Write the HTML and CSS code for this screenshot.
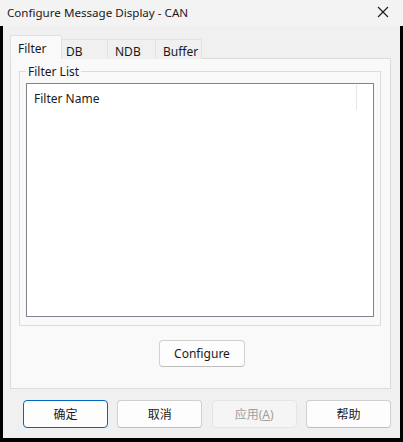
FILE: index.html
```html
<!DOCTYPE html>
<html lang="zh-CN">
<head>
    <meta charset="UTF-8">
    <meta name="viewport" content="width=device-width, initial-scale=1.0">
    <title>Configure Message Display - CAN</title>
    <link rel="stylesheet" href="styles.css">
</head>
<body>
    <div class="window">
        <div class="titlebar">
            <span class="title">Configure Message Display - CAN</span>
            <button class="close" type="button" aria-label="Close">
                <svg width="12" height="12" viewBox="0 0 12 12">
                    <path d="M1 1 L11 11 M11 1 L1 11" stroke="#1a1a1a" stroke-width="1.1" fill="none"/>
                </svg>
            </button>
        </div>
        <div class="client">
            <div class="tabs">
                <div class="tab active">Filter</div>
                <div class="tab">DB</div>
                <div class="tab">NDB</div>
                <div class="tab">Buffer</div>
            </div>
            <div class="tab-panel">
                <div class="group">
                    <span class="group-title">Filter List</span>
                    <div class="listbox">
                        <div class="list-header">
                            <div class="col-name">Filter Name</div>
                            <div class="col-rest"></div>
                        </div>
                    </div>
                </div>
                <div class="panel-actions">
                    <button class="btn" type="button">Configure</button>
                </div>
            </div>
            <div class="dialog-buttons">
                <button class="btn btn-default" type="button">确定</button>
                <button class="btn" type="button">取消</button>
                <button class="btn" type="button" disabled>应用(<u>A</u>)</button>
                <button class="btn" type="button">帮助</button>
            </div>
        </div>
    </div>
</body>
</html>
```

FILE: styles.css
```css
/* Dialog window */
body {
    margin: 0;
    padding: 0;
    font-family: "Noto Sans", "Noto Sans CJK SC", sans-serif;
    font-size: 12px;
    color: #1a1a1a;
}

.window {
    width: 403px;
    height: 442px;
    background-color: #000;
    display: flex;
    flex-direction: column;
}

.titlebar {
    height: 26px;
    background-color: #f3f3f3;
    display: flex;
    align-items: center;
    justify-content: space-between;
    padding: 0 10px 0 7px;
    flex-shrink: 0;
}

.title {
    font-size: 11.6px;
    color: #1a1a1a;
    margin-top: -2px;
}

.close {
    border: none;
    background: none;
    padding: 0;
    width: 12px;
    height: 12px;
    display: flex;
    margin-right: 4px;
    margin-top: -2px;
}

.client {
    flex: 1;
    margin: 0 3px 4px 3px;
    background-color: #f0f0f0;
    padding: 9px 9px 0 7px;
    display: flex;
    flex-direction: column;
}

/* Tabs */
.tabs {
    display: flex;
    align-items: flex-end;
    height: 24px;
    position: relative;
    z-index: 1;
    margin-bottom: -1px;
}

.tab {
    height: 20px;
    width: 47px;
    box-sizing: border-box;
    border: 1px solid #e3e3e3;
    border-bottom: none;
    background-color: #f0f0f0;
    padding: 3px 0 0 5px;
    font-size: 12px;
    margin-left: -1px;
}

.tab.active {
    height: 24px;
    width: 52px;
    margin-left: 0;
    background-color: #f9f9f9;
    border-color: #e0e0e0;
    padding: 4px 0 0 7px;
}

.tab:nth-child(2) {
    padding-left: 4px;
}

.tab:nth-child(3) {
    width: 49px;
    padding-left: 7px;
}

.tab:nth-child(4) {
    padding-left: 7px;
}

.tab-panel {
    height: 331px;
    box-sizing: border-box;
    border: 1px solid #dcdcdc;
    background-color: #f9f9f9;
    padding: 12px 9px 0 8px;
}

/* Group box */
.group {
    position: relative;
    height: 255px;
    box-sizing: border-box;
    border: 1px solid #dcdcdc;
    padding: 11px 6px 8px 6px;
}

.group-title {
    position: absolute;
    top: -9px;
    left: 6px;
    padding: 0 2px;
    background-color: #f9f9f9;
    font-size: 12px;
}

.listbox {
    height: 100%;
    box-sizing: border-box;
    border: 1px solid #82828c;
    background-color: #fff;
}

.list-header {
    display: flex;
    height: 25px;
    padding-top: 1px;
}

.col-name {
    width: 330px;
    box-sizing: border-box;
    padding: 5px 0 0 7px;
    border-right: 1px solid #e5e5e5;
    font-size: 12px;
}

.panel-actions {
    display: flex;
    justify-content: center;
    padding-top: 14px;
    padding-left: 4px;
}

/* Buttons */
.btn {
    font-family: "Noto Sans", "Noto Sans CJK SC", sans-serif;
    font-size: 12px;
    color: #1a1a1a;
    width: 86px;
    height: 27px;
    box-sizing: border-box;
    border: 1px solid #d0d0d0;
    border-bottom-color: #bdbdbd;
    border-radius: 4px;
    background-color: #fdfdfd;
    padding: 0;
}

.btn:disabled {
    background-color: #f5f5f5;
    border-color: #e5e5e5;
    color: #a0a0a0;
}

.btn-default {
    border: 1px solid #0067c0;
}

.dialog-buttons {
    display: flex;
    gap: 9.5px;
    padding: 11px 0 0 13px;
}

.dialog-buttons .btn {
    width: 85.5px;
    height: 28px;
}
```
